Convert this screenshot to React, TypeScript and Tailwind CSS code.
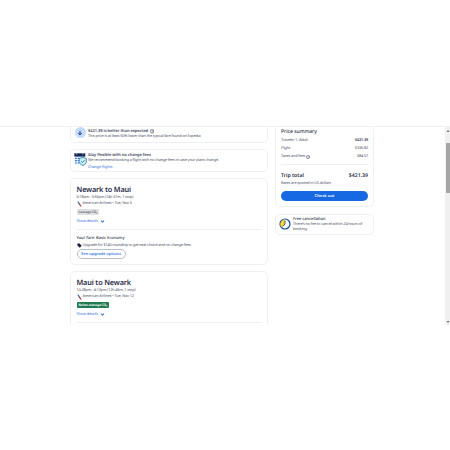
import { ChevronDown, Info } from 'lucide-react';
import { clsx } from 'clsx';

interface Flight {
  route: string;
  times: string;
  airline: string;
  co2: string;
  green: boolean;
}

const flights: Flight[] = [
  { route: 'Newark to Maui', times: '6:18am - 3:55pm (14h 37m, 1 stop)', airline: 'American Airlines • Tue, Nov 5', co2: 'Average CO₂', green: false },
  { route: 'Maui to Newark', times: '10:28pm - 4:13pm (12h 45m, 1 stop)', airline: 'American Airlines • Tue, Nov 12', co2: 'Below average CO₂', green: true },
];

function AirlineLogo() {
  return (
    <svg viewBox="0 0 5 6" className="w-[5px] h-[6px] shrink-0">
      <path d="M0.2 0.6 L1.7 0.8 L2.6 2.6 L1.5 2.8 Z" fill="#2463ad" />
      <path d="M1.6 2.9 L2.7 2.6 L4.8 5.6 L3.4 5.5 Z" fill="#c62b3b" />
      <path d="M1.4 1.8 L3.2 3.2 L2.4 3.8 Z" fill="#33405d" />
    </svg>
  );
}

function CalendarIcon() {
  return (
    <svg viewBox="0 0 13 14" className="w-[13px] h-[14px] shrink-0">
      <rect x="0.5" y="1" width="10.8" height="11.3" rx="0.6" fill="#f3f7ff" />
      <path d="M0.4 1.3h10.9v3.3H0.4z" fill="#102553" />
      <path d="M2.8 1v1.7M8.8 1v1.7" stroke="#b7cdf5" strokeWidth="0.8" />
      <path d="M1 6.4h1.8M3.7 6.4h1.8M1 8.7h1.8M3.7 8.7h1.2M1 11h1.8M3.7 11h1.5" stroke="#2868d8" strokeWidth="1.2" />
      <path d="M8.8 5.4l3.6 1.2v2.8c0 2-1.5 3.2-3.6 4.1-2.1-.9-3.6-2.1-3.6-4.1V6.6z" fill="#c4f0f8" stroke="#23749b" strokeWidth="0.8" />
      <path d="M7.2 9.2l1.3 1.3 2.1-2.3" fill="none" stroke="#167b91" strokeWidth="0.8" />
    </svg>
  );
}

function ClockIcon() {
  return (
    <svg viewBox="0 0 12 12" className="w-3 h-3 shrink-0">
      <circle cx="6" cy="6" r="5" fill="#f4f8ff" stroke="#174aa0" strokeWidth="1.2" />
      <path d="M6 6V1.5A4.5 4.5 0 0 0 3 9.4z" fill="#ffd429" />
      <path d="M6 2.5V6L3.7 8.4" fill="none" stroke="#17376f" strokeWidth="0.8" />
    </svg>
  );
}

function ShowDetails() {
  return (
    <div className="flex items-start gap-[2.5px] h-[5px] leading-[6px] text-[3.8px] tracking-[-0.08px] text-[#3b74e0]">
      <span>Show details</span>
      <ChevronDown className="w-[5px] h-[5px]" strokeWidth={5} />
    </div>
  );
}

function FlightCard({ flight, fare }: { flight: Flight; fare?: boolean }) {
  return (
    <section className={clsx('shrink-0 rounded-[5px] border border-[#f0f0f2] px-[5.5px] pt-[6.5px]', fare ? 'h-[87px] mb-1.5' : 'h-[88px]')}>
      <h2 className="h-[9px] leading-[9px] text-[7.3px] tracking-[-0.16px] font-semibold text-[#292d47]">{flight.route}</h2>
      <p className="mt-[0.5px] h-[5px] leading-[5px] text-[3.8px] tracking-[-0.15px]">{flight.times}</p>
      <p className="mt-px flex items-center h-[5px] text-[3.8px] tracking-[-0.13px]"><AirlineLogo /><span className="ml-px">{flight.airline}</span></p>
      <div className={clsx('mt-[2.5px] w-fit h-[6px] rounded-[1px] px-[2px] leading-[6px] text-[3.3px] tracking-[-0.1px]', flight.green ? 'bg-[#217a50] text-white font-semibold' : 'bg-[#dfe0e4] font-medium')}>
        {flight.co2}
      </div>
      <div className="mt-[4px]"><ShowDetails /></div>
      <div className="mt-[5px] border-t border-[#eeeef0]" />
      {fare && (
        <>
          <h3 className="mt-[6px] h-[6px] leading-[6px] text-[4px] font-medium text-[#33374f]">Your fare: Basic Economy</h3>
          <div className="mt-[1px] flex items-center h-[6px] text-[3.8px] tracking-[-0.15px]">
            <svg viewBox="0 0 5 5" className="w-[5px] h-[5px] mr-px">
              <path d="M.4.4h2.2l2.1 2.3-1.9 2L.4 2.6z" fill="#191e3b" />
            </svg>
            Upgrade for $140 roundtrip to get seat choice and no change fees.
          </div>
          <button className="mt-[0.5px] flex items-center justify-center w-[49px] h-[10px] rounded-full border border-[#b9bdc7] text-[4.2px] tracking-[-0.08px] font-medium text-[#1668e3]">
            See upgrade options
          </button>
        </>
      )}
    </section>
  );
}

function PriceRow({ label, price, bold, info }: { label: string; price: string; bold?: boolean; info?: boolean }) {
  return (
    <div className="flex items-center justify-between h-2 text-[3.8px] tracking-[-0.13px]">
      <span className="flex items-center gap-px">{label}{info && <Info className="w-1 h-1" strokeWidth={3} />}</span>
      <span className={clsx(bold && 'font-semibold text-[#33374f]')}>{price}</span>
    </div>
  );
}

export default function App() {
  return (
    <div className="w-[450px] h-[450px] bg-white pt-[126px] overflow-hidden whitespace-nowrap text-[#505469] font-['Noto_Sans','Open_Sans',sans-serif] [text-rendering:geometricPrecision]">
      <div className="flex h-[199px] border-t border-[#f0f0f1] overflow-hidden">
        <main className="flex flex-col ml-[70px] w-[198px] h-[198px] overflow-hidden">
          <section className="shrink-0 flex h-[15.5px] mb-1.5 rounded-b-[5px] border border-t-0 border-[#f0f0f2] pl-[3.5px]">
            <div className="flex items-center justify-center w-[11px] h-[11px] rounded-full bg-[#c4dcff]">
              <svg viewBox="0 0 6 6" className="w-1.5 h-1.5" fill="none" stroke="#24416f" strokeWidth="1">
                <path d="M3 .8v4M1.1 3L3 4.9 4.9 3" />
              </svg>
            </div>
            <div className="ml-[2.5px] pt-[2px]">
              <h3 className="flex items-center gap-[2px] h-[5px] text-[4px] tracking-[-0.04px] font-semibold text-[#3e4259]">
                $421.39 is better than expected <Info className="w-[4.5px] h-[4.5px]" strokeWidth={3} />
              </h3>
              <p className="h-[5px] leading-[5px] text-[3.8px] tracking-[-0.15px]">This price is at least 50% lower than the typical fare found on Expedia</p>
            </div>
          </section>

          <section className="shrink-0 flex h-[23.5px] mb-1.5 rounded-[5px] border border-[#f0f0f2] pl-[2.5px] pt-[2.5px]">
            <CalendarIcon />
            <div className="ml-[1.5px] pt-px">
              <h3 className="h-[5px] leading-[5px] text-[4px] tracking-[-0.03px] font-semibold text-[#3e4259]">Stay flexible with no change fees</h3>
              <p className="h-[5px] leading-[5px] text-[3.8px] tracking-[-0.15px]">We recommend booking a flight with no change fees in case your plans change.</p>
              <a className="block mt-[2px] h-[5px] leading-[5px] text-[3.8px] tracking-[-0.09px] text-[#3b74e0]">Change flights</a>
            </div>
          </section>

          <FlightCard flight={flights[0]} fare />
          <FlightCard flight={flights[1]} />
        </main>

        <aside className="ml-[7px] w-[99px]">
          <section className="h-[80px] rounded-b-[5px] border border-t-0 border-[#f0f0f2] px-[5px] pt-[1.5px]">
            <h2 className="h-[6px] leading-[6px] mb-[2px] text-[5.1px] tracking-[-0.05px] font-medium text-[#292d47]">Price summary</h2>
            <PriceRow label="Traveler 1: Adult" price="$421.39" bold />
            <PriceRow label="Flight" price="$336.82" />
            <PriceRow label="Taxes and fees" price="$84.57" info />
            <div className="mt-[3.5px] border-t border-[#eeeef0]" />
            <div className="mt-[6px] flex items-center justify-between h-[9px] text-[5.2px] font-semibold text-[#292d47]">
              <span>Trip total</span>
              <span>$421.39</span>
            </div>
            <p className="mt-px h-[5px] leading-[5px] text-[3.8px] tracking-[-0.12px]">Rates are quoted in US dollars</p>
            <button className="mt-[4.5px] pt-[0.5px] flex items-center justify-center w-full h-[10px] rounded-full bg-[#1668e3] text-[4.1px] font-semibold text-white">Check out</button>
          </section>

          <section className="mt-[6.5px] flex items-center h-[21px] rounded-[5px] border border-[#f0f0f2] pl-[3px]">
            <ClockIcon />
            <div className="ml-[2px] pt-[1.5px]">
              <h3 className="h-[5px] leading-[5px] text-[4px] font-medium text-[#292d47]">Free cancellation</h3>
              <p className="leading-[5px] text-[3.8px] tracking-[-0.14px]">There's no fee to cancel within 24 hours of<br />booking.</p>
            </div>
          </section>
        </aside>

        <div className="ml-auto flex flex-col items-center w-[5px] h-[198px] bg-[#f0f0f0]">
          <svg viewBox="0 0 4 4" className="mt-[2px] w-1 h-1" fill="#707070"><path d="M.5 3L2 1l1.5 2z" /></svg>
          <div className="mt-[10px] w-[4px] h-[50px] bg-[#a6a6a6]" />
          <svg viewBox="0 0 4 4" className="mt-auto mb-px w-1 h-1" fill="#707070"><path d="M.5 1h3L2 3z" /></svg>
        </div>
      </div>
    </div>
  );
}
